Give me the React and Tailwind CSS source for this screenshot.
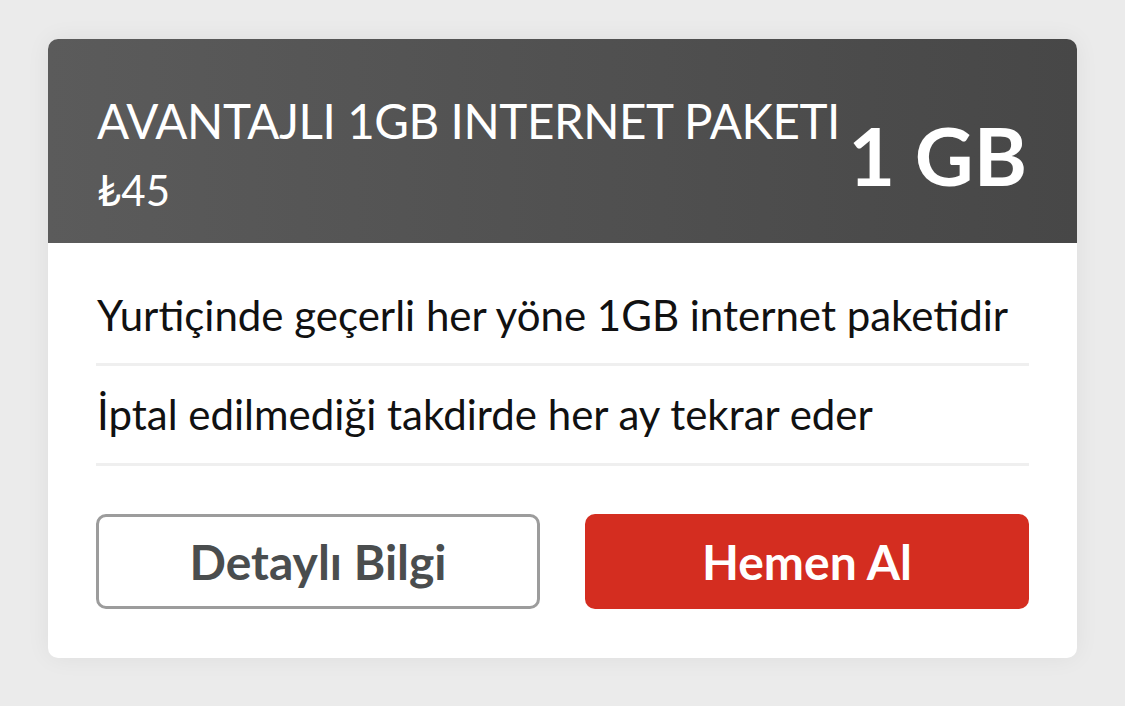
export default function App() {
  const font = { fontFamily: 'Lato, "Open Sans", sans-serif' }
  return (
    <div className="min-h-screen bg-[#ebebeb] pt-[39px] pl-[48px]" style={font}>
      <div className="w-[1029px] rounded-[10px] overflow-hidden bg-white shadow-[0_0_24px_rgba(0,0,0,0.06)]">
        {/* Header */}
        <div className="h-[204px] flex items-center justify-between pl-[49px] pr-[50px] pt-[26px] bg-gradient-to-r from-[#5b5b5b] to-[#474747] text-white whitespace-nowrap">
          <div className="flex flex-col min-w-0">
            <div className="text-[47.5px] font-normal leading-none tracking-[-0.009em]">AVANTAJLI 1GB INTERNET PAKETI</div>
            <div className="text-[42px] font-normal leading-none mt-[25px]">₺45</div>
          </div>
          <div className="text-[81px] font-bold leading-none shrink-0">1 GB</div>
        </div>

        {/* Body */}
        <div className="px-[48px]">
          <div className="pt-[48px] pb-[24px] border-b-[3px] border-[#efefef] text-[42px] text-[#111] leading-[48px] px-px">
            Yurtiçinde geçerli her yöne 1GB internet paketidir
          </div>
          <div className="pt-[24px] pb-[25px] border-b-[3px] border-[#efefef] text-[42px] text-[#111] leading-[48px] px-px">
            İptal edilmediği takdirde her ay tekrar eder
          </div>
          <div className="flex gap-[45px] pt-[48px] pb-[49px]">
            <button className="w-[444px] h-[95px] rounded-[10px] border-[3px] border-[#9c9c9c] bg-white text-[#4a4d4e] text-[48px] font-bold">
              Detaylı Bilgi
            </button>
            <button className="w-[444px] h-[95px] rounded-[10px] bg-[#d42d20] text-white text-[48px] font-bold">
              Hemen Al
            </button>
          </div>
        </div>
      </div>
    </div>
  )
}
